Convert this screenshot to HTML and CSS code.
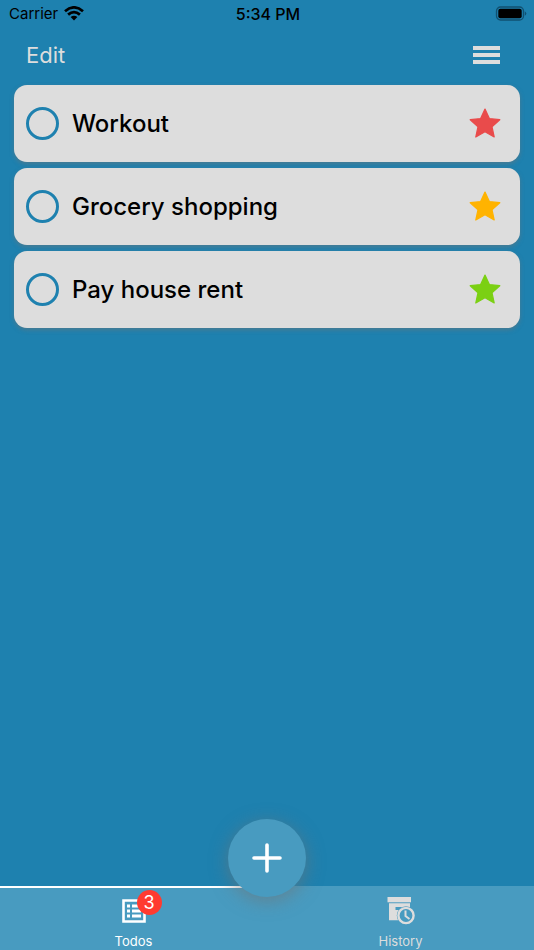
FILE: index.html
```html
<!DOCTYPE html>
<html lang="en">
<head>
    <meta charset="UTF-8">
    <meta name="viewport" content="width=device-width, initial-scale=1.0">
    <title>Todos</title>
    <link rel="stylesheet" href="styles.css">
</head>
<body>
    <!-- Star shape shared by the todo items -->
    <svg class="symbols" aria-hidden="true">
        <symbol id="star" viewBox="0 0 32 32">
            <path d="M16 1l4.4 9.6 10.4 1.1-7.8 7 2.2 10.3-9.2-5.2-9.2 5.2 2.2-10.3-7.8-7 10.4-1.1z" fill="currentColor" stroke="currentColor" stroke-width="1.2" stroke-linejoin="round"/>
        </symbol>
    </svg>

    <!-- Status bar -->
    <div class="status-bar">
        <div class="status-left">
            <span>Carrier</span>
            <svg class="wifi-icon" viewBox="0 0 20 15">
                <path d="M1 5.2Q10-2.4 19 5.2M4.1 8.6Q10 3.6 15.9 8.6" fill="none" stroke="#000" stroke-width="2.8"/>
                <path d="M6.6 11.1Q10 8.3 13.4 11.1L10 14.6z"/>
            </svg>
        </div>
        <div class="status-time">5:34 PM</div>
        <div class="status-right">
            <svg class="battery-icon" viewBox="0 0 32 15">
                <rect x="1.5" y="1" width="27" height="13" rx="4" fill="none" stroke="#115071" stroke-width="1.3"/>
                <rect x="3.3" y="2.8" width="23.4" height="9.4" rx="2"/>
                <path d="M29.8 5.2q3 2.3 0 4.6z" fill="#115071"/>
            </svg>
        </div>
    </div>

    <!-- Header -->
    <header class="header">
        <button class="edit-button" type="button">Edit</button>
        <button class="menu-button" type="button" aria-label="Menu">
            <svg width="27" height="18" viewBox="0 0 27 18">
                <path d="M0 0h27v4H0zM0 7h27v4H0zM0 14h27v4H0z" fill="#ddd"/>
            </svg>
        </button>
    </header>

    <!-- Todo list -->
    <main class="todo-list">
        <div class="todo-item">
            <input class="todo-check" type="checkbox" id="todo-1">
            <label class="todo-title" for="todo-1">Workout</label>
            <svg class="star star-high"><use href="#star"/></svg>
        </div>
        <div class="todo-item">
            <input class="todo-check" type="checkbox" id="todo-2">
            <label class="todo-title" for="todo-2">Grocery shopping</label>
            <svg class="star star-medium"><use href="#star"/></svg>
        </div>
        <div class="todo-item">
            <input class="todo-check" type="checkbox" id="todo-3">
            <label class="todo-title" for="todo-3">Pay house rent</label>
            <svg class="star star-low"><use href="#star"/></svg>
        </div>
    </main>

    <!-- Tab bar -->
    <nav class="tab-bar">
        <a class="tab active" href="#todos">
            <span class="tab-icon">
                <svg width="24" height="24" viewBox="0 0 24 24">
                    <path d="M1.5 1.5h21v21h-21z" fill="none" stroke="#fff" stroke-width="2.6"/>
                    <path d="M5 5.5h3v3H5zM5 10.5h3v3H5zM5 15.5h3v3H5zM10 5.5h9v3h-9zM10 10.5h9v3h-9zM10 15.5h9v3h-9z" fill="#fff"/>
                </svg>
                <span class="badge">3</span>
            </span>
            <span>Todos</span>
        </a>
        <a class="tab" href="#history">
            <span class="tab-icon">
                <svg width="28" height="28" viewBox="0 0 28 28">
                    <path d="M.5 0H24v5.3H.5z" fill="#ddd"/>
                    <path d="M2 6.3h21V18l-8 5.3H2z" fill="#ddd"/>
                    <path d="M8.5 10H15l-2.5 3h-4z" fill="#489bc0"/>
                    <circle cx="19" cy="18.5" r="9.2" fill="#489bc0"/>
                    <circle cx="19" cy="18.5" r="7.6" fill="none" stroke="#ddd" stroke-width="2.4"/>
                    <path d="M18.5 13.5V19l4 3" fill="none" stroke="#ddd" stroke-width="2"/>
                </svg>
            </span>
            <span>History</span>
        </a>
        <button class="add-button" type="button" aria-label="Add todo">
            <svg width="30" height="30" viewBox="0 0 30 30">
                <path d="M15 2v26M2 15h26" stroke="#fff" stroke-width="3.6" stroke-linecap="round"/>
            </svg>
        </button>
    </nav>
</body>
</html>
```
FILE: styles.css
```css
* {
    box-sizing: border-box;
}
body {
    font-family: Inter, Roboto, sans-serif;
    margin: 0;
    background-color: #1e81af;
    color: #000;
    display: flex;
    flex-direction: column;
    min-height: 100vh;
}
button {
    font-family: inherit;
    padding: 0;
    border: none;
    background: none;
    cursor: pointer;
}
svg {
    display: block;
}
.symbols {
    position: absolute;
    width: 0;
    height: 0;
}
.status-bar {
    display: grid;
    grid-template-columns: 1fr auto 1fr;
    align-items: center;
    height: 27px;
    padding: 0 7px 0 9px;
    font-size: 15px;
}
.status-left {
    display: flex;
    align-items: center;
    gap: 6px;
}
.status-time {
    font-size: 16px;
    font-weight: 500;
}
.status-right {
    display: flex;
    justify-content: flex-end;
}
.wifi-icon {
    width: 20px;
    height: 15px;
}
.battery-icon {
    width: 32px;
    height: 15px;
}
.header {
    display: flex;
    justify-content: space-between;
    align-items: center;
    height: 55px;
    padding: 0 34px 0 26px;
}
.edit-button {
    font-size: 22px;
    color: #ddd;
}
.todo-list {
    flex: 1;
    display: flex;
    flex-direction: column;
    gap: 6px;
    padding: 3px 14px;
}
.todo-item {
    display: flex;
    align-items: center;
    gap: 13px;
    height: 77px;
    padding: 0 19px 0 12px;
    border-radius: 13px;
    background-color: #ddd;
    box-shadow: 0 2px 4px rgba(115, 115, 115, 0.5);
}
.todo-check {
    appearance: none;
    width: 33px;
    height: 33px;
    margin: 0;
    border: 3px solid #1e81af;
    border-radius: 50%;
}
.todo-title {
    flex: 1;
    font-size: 24px;
    font-weight: 500;
}
.star {
    width: 32px;
    height: 32px;
}
.star-high {
    color: #e94b4b;
}
.star-medium {
    color: #ffb300;
}
.star-low {
    color: #7bd013;
}
.tab-bar {
    position: relative;
    display: flex;
    height: 64px;
    background-color: #489bc0;
}
.tab {
    flex: 1;
    display: flex;
    flex-direction: column;
    align-items: center;
    justify-content: space-between;
    padding: 9px 0 1px;
    border-top: 2px solid transparent;
    font-size: 13px;
    line-height: 16px;
    color: #ddd;
    text-decoration: none;
}
.tab.active {
    border-top-color: #fff;
    color: #fff;
}
.tab-icon {
    position: relative;
    display: flex;
    align-items: center;
    height: 28px;
}
.badge {
    position: absolute;
    top: -7px;
    left: 15px;
    width: 25px;
    height: 25px;
    border-radius: 50%;
    background-color: #ff3b30;
    color: #fff;
    font-size: 18px;
    line-height: 25px;
    text-align: center;
}
/* floats over the top edge of the tab bar */
.add-button {
    position: absolute;
    top: -67px;
    left: calc(50% - 39px);
    display: flex;
    align-items: center;
    justify-content: center;
    width: 78px;
    height: 78px;
    border-radius: 50%;
    background-color: #489bc0;
    box-shadow: 0 4px 18px rgba(115, 115, 115, 0.6);
}
```
